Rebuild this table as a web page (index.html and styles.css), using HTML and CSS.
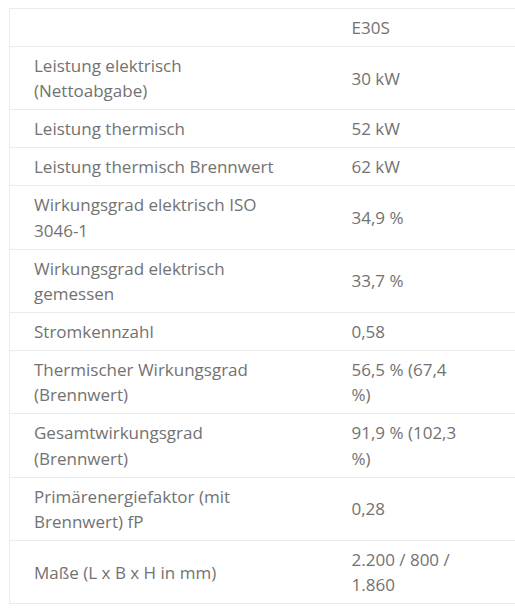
FILE: index.html
```html
<!DOCTYPE html>
<html lang="de">
<head>
<meta charset="utf-8">
<link rel="stylesheet" href="styles.css">
</head>
<body>
<table class="spec">
  <colgroup><col class="c-label"><col class="c-value"></colgroup>
  <tbody>
    <tr><td><div class="lab"></div></td><td><div class="val">E30S</div></td></tr>
    <tr><td><div class="lab">Leistung elektrisch (Nettoabgabe)</div></td><td><div class="val">30 kW</div></td></tr>
    <tr><td><div class="lab">Leistung thermisch</div></td><td><div class="val">52 kW</div></td></tr>
    <tr><td><div class="lab">Leistung thermisch Brennwert</div></td><td><div class="val">62 kW</div></td></tr>
    <tr><td><div class="lab">Wirkungsgrad elektrisch ISO 3046-1</div></td><td><div class="val">34,9 %</div></td></tr>
    <tr><td><div class="lab">Wirkungsgrad elektrisch gemessen</div></td><td><div class="val">33,7 %</div></td></tr>
    <tr><td><div class="lab">Stromkennzahl</div></td><td><div class="val">0,58</div></td></tr>
    <tr><td><div class="lab">Thermischer Wirkungsgrad (Brennwert)</div></td><td><div class="val">56,5 % (67,4 %)</div></td></tr>
    <tr><td><div class="lab">Gesamtwirkungsgrad (Brennwert)</div></td><td><div class="val">91,9 % (102,3 %)</div></td></tr>
    <tr><td><div class="lab">Primärenergiefaktor (mit Brennwert) fP</div></td><td><div class="val">0,28</div></td></tr>
    <tr><td><div class="lab">Maße (L x B x H in mm)</div></td><td><div class="val">2.200 / 800 / 1.860</div></td></tr>
  </tbody>
</table>
</body>
</html>
```
FILE: styles.css
```css
html, body {
  margin: 0;
  padding: 0;
  background: #ffffff;
  overflow: hidden;
}
body {
  padding: 8px 0 0 9px;
  font-family: "Open Sans", "Noto Sans", sans-serif;
  font-size: 17px;
  color: #727272;
}
.spec {
  border-collapse: collapse;
  table-layout: fixed;
  width: 506px;
  border-top: 1px solid #ebebeb;
  border-left: 1px solid #ebebeb;
}
.c-label { width: 318px; }
.spec td {
  padding: 6px 24px 5.5px 24px;
  line-height: 25.43px;
  border-bottom: 1px solid #ebebeb;
  vertical-align: middle;
}
.lab {
  width: 252px;
  min-height: 25.43px;
}
.val {
  width: 112px;
}
```
